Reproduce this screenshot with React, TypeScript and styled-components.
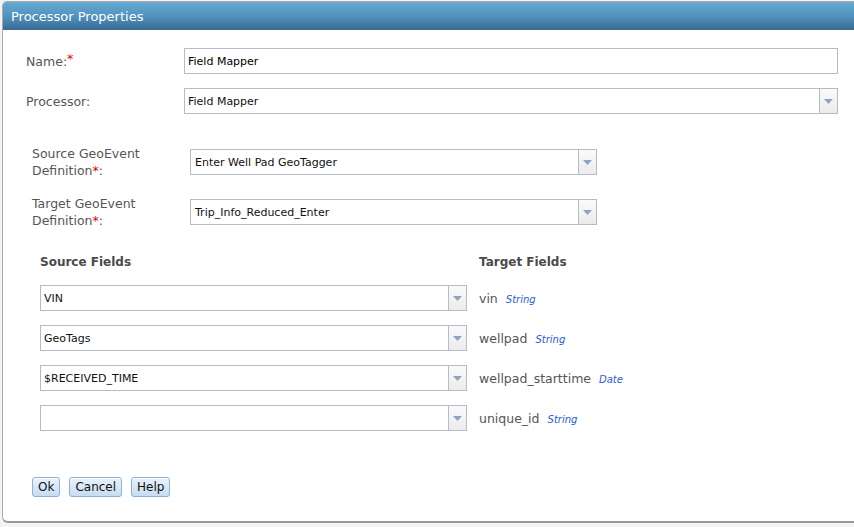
import React from 'react'
import styled, { createGlobalStyle } from 'styled-components'

const GlobalStyle = createGlobalStyle`
  html, body {
    margin: 0;
    padding: 0;
    background: #f4f4f4;
    font-family: "DejaVu Sans", Verdana, sans-serif;
    overflow: hidden;
  }
`

interface FieldMapping {
  source: string
  target: string
  type: string
}

const mappings: FieldMapping[] = [
  { source: 'VIN', target: 'vin', type: 'String' },
  { source: 'GeoTags', target: 'wellpad', type: 'String' },
  { source: '$RECEIVED_TIME', target: 'wellpad_starttime', type: 'Date' },
  { source: '', target: 'unique_id', type: 'String' },
]

function Select(props: { value: string; width: number; indent?: number }) {
  const { value, width, indent } = props
  return (
    <SelectBox $width={width}>
      <SelectValue $indent={indent ?? 3}>{value}</SelectValue>
      <ArrowButton>
        <svg width="9" height="5" viewBox="0 0 9 5">
          <path d="M0 0H9L4.5 5Z" fill="#8ea3c6" />
        </svg>
      </ArrowButton>
    </SelectBox>
  )
}

export default function App() {
  return (
    <>
      <GlobalStyle />
      <Page>
        <Dialog>
          <TitleBar>Processor Properties</TitleBar>
          <Body>
            <TopForm>
              <Label>
                Name:<Required $raised>*</Required>
              </Label>
              <TextInput>Field Mapper</TextInput>
              <Label>Processor:</Label>
              <Select value="Field Mapper" width={654} />
            </TopForm>

            <DefinitionForm>
              <Label>
                Source GeoEvent
                <br />
                Definition<Required>*</Required>:
              </Label>
              <Select value="Enter Well Pad GeoTagger" width={407} indent={4} />
              <Label>
                Target GeoEvent
                <br />
                Definition<Required>*</Required>:
              </Label>
              <Select value="Trip_Info_Reduced_Enter" width={407} indent={4} />
            </DefinitionForm>

            <FieldGrid>
              <ColumnHeader>Source Fields</ColumnHeader>
              <ColumnHeader>Target Fields</ColumnHeader>
              {mappings.map((m) => (
                <React.Fragment key={m.target}>
                  <Select value={m.source} width={427} />
                  <TargetField>
                    {m.target}
                    <FieldType>{m.type}</FieldType>
                  </TargetField>
                </React.Fragment>
              ))}
            </FieldGrid>

            <Buttons>
              <Button>Ok</Button>
              <Button>Cancel</Button>
              <Button>Help</Button>
            </Buttons>
          </Body>
        </Dialog>
      </Page>
    </>
  )
}

const Page = styled.div`
  width: 854px;
  height: 527px;
  padding: 1px 0 0 2px;
  box-sizing: border-box;
  overflow: hidden;
`
const Dialog = styled.div`
  width: 880px;
  height: 522px;
  box-sizing: border-box;
  background: #fff;
  border: 1px solid #a9a9a9;
  border-bottom: 2px solid #9a9a9a;
  border-radius: 5px 0 0 6px;
  overflow: hidden;
  display: flex;
  flex-direction: column;
`
const TitleBar = styled.div`
  height: 28px;
  flex: none;
  display: flex;
  align-items: center;
  padding-left: 8px;
  color: #fff;
  font-size: 13px;
  background: linear-gradient(to bottom, #65a9d1 0%, #5193bf 50%, #386a92 100%);
`
const Body = styled.div`
  display: flex;
  flex-direction: column;
  padding: 18px 0 0 23px;
`
const TopForm = styled.div`
  display: grid;
  grid-template-columns: 158px auto;
  row-gap: 14px;
  align-items: center;
`
const DefinitionForm = styled.div`
  display: grid;
  grid-template-columns: 158px auto;
  row-gap: 16px;
  align-items: center;
  margin: 31px 0 0 6px;
`
const Label = styled.div`
  font-size: 12.5px;
  line-height: 17px;
  color: #555;
`
const Required = styled.span<{ $raised?: boolean }>`
  color: #e8000b;
  position: relative;
  top: ${(p) => (p.$raised ? '-3px' : '0')};
`
const TextInput = styled.div`
  width: 654px;
  height: 26px;
  box-sizing: border-box;
  border: 1px solid #b4bccb;
  padding-left: 3px;
  display: flex;
  align-items: center;
  font-size: 11px;
  color: #000;
`
const SelectBox = styled.div<{ $width: number }>`
  width: ${(p) => p.$width}px;
  height: 26px;
  box-sizing: border-box;
  border: 1px solid #b4bccb;
  display: flex;
`
const SelectValue = styled.div<{ $indent: number }>`
  flex: 1;
  display: flex;
  align-items: center;
  padding-left: ${(p) => p.$indent}px;
  font-size: 11px;
  color: #111;
  white-space: nowrap;
`
const ArrowButton = styled.div`
  width: 18px;
  flex: none;
  border-left: 1px solid #b4bccb;
  background: linear-gradient(to bottom, #fafafa, #ebebeb);
  display: flex;
  align-items: center;
  justify-content: center;
  padding-top: 1px;
  box-sizing: border-box;
`
const FieldGrid = styled.div`
  display: grid;
  grid-template-columns: 427px auto;
  column-gap: 12px;
  row-gap: 14px;
  align-items: center;
  margin: 26px 0 0 14px;
`
const ColumnHeader = styled.div`
  font-size: 12px;
  font-weight: bold;
  color: #4a4a4a;
  margin-bottom: 2px;
`
const TargetField = styled.div`
  font-size: 12.5px;
  color: #555;
  display: flex;
  align-items: baseline;
`
const FieldType = styled.span`
  font-size: 10px;
  font-style: italic;
  color: #2a5bd7;
  margin-left: 8px;
`
const Buttons = styled.div`
  display: flex;
  gap: 9px;
  margin: 46px 0 0 6px;
`
const Button = styled.button`
  height: 20px;
  padding: 0 5px;
  font-family: "DejaVu Sans", Verdana, sans-serif;
  font-size: 12px;
  color: #111;
  border: 1px solid #8fb0d6;
  border-radius: 3px;
  background: linear-gradient(to bottom, #eaf3fc, #c6dcf2);
  box-shadow: inset 0 1px 0 #fff;
`
